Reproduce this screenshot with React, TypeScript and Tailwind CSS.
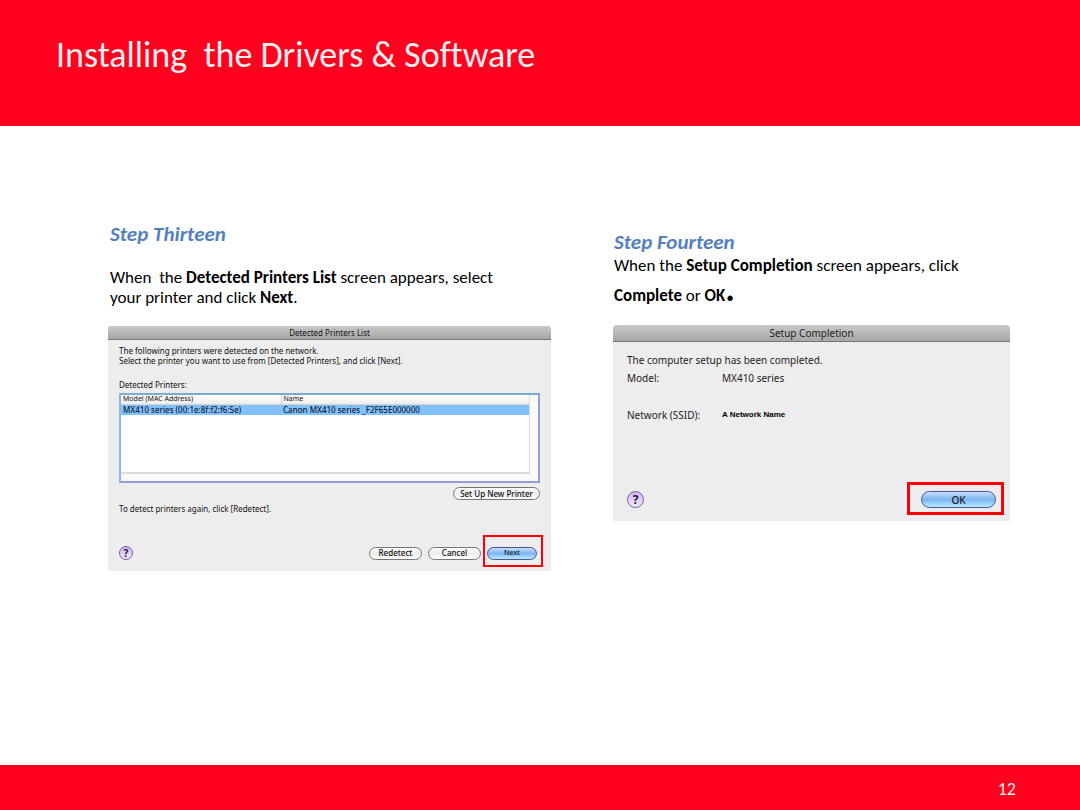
import type { ReactNode } from "react";

function HelpButton({ className }: { className: string }) {
  return (
    <button
      type="button"
      aria-label="Help"
      className={`flex shrink-0 items-center justify-center rounded-full border border-[#75609a] bg-gradient-to-b from-[#d0b4f2] to-[#f6e9ff] font-bold text-[#22182e] ${className}`}
    >
      ?
    </button>
  );
}

function PushButton({ className, children }: { className: string; children: ReactNode }) {
  return (
    <button
      type="button"
      className={`h-[13px] rounded-full border border-[#777] bg-gradient-to-b from-white via-[#ececec] to-white text-[8px] leading-[10px] font-medium text-[#111] ${className}`}
    >
      {children}
    </button>
  );
}

function DefaultButton({ className, children }: { className: string; children: ReactNode }) {
  return (
    <button
      type="button"
      className={`rounded-full border border-[#4b539c] bg-gradient-to-b from-[#c9e0fa] via-[#7db4f1] to-[#b4ecff] font-medium text-[#10182c] ${className}`}
    >
      {children}
    </button>
  );
}

function DetectedPrintersDialog() {
  return (
    <section className="flex h-[245px] flex-col overflow-hidden rounded-t-[3px] bg-[#ededed] font-['Noto_Sans',sans-serif] text-[8px] leading-[10px] text-[#111]">
      <h3 className="h-[14px] shrink-0 border-b border-[#777] bg-gradient-to-b from-[#c9c9c9] to-[#a6a6a6] text-center leading-[13px]">
        Detected Printers List
      </h3>
      <div className="flex flex-1 flex-col px-[11px] pt-[6px]">
        <p>The following printers were detected on the network.</p>
        <p>Select the printer you want to use from [Detected Printers], and click [Next].</p>
        <p className="mt-[14px]">Detected Printers:</p>
        <div className="mt-[3px] h-[90px] border-2 border-[#8f9fe0] border-t-[#78acd8] border-l-[#84b9ea] bg-[#fafafa]">
          <div className="mr-[8px] h-[79px] border-r border-b-2 border-[#dcdcdc] bg-white">
            <table className="w-full table-fixed border-collapse text-left">
              <thead>
                <tr className="h-[9px] bg-gradient-to-b from-white to-[#ededed] text-[7px] leading-[8px]">
                  <th className="w-[160px] border-r border-b border-[#d2d2d2] py-0 pl-[2px] font-normal">
                    Model (MAC Address)
                  </th>
                  <th className="border-b border-[#d2d2d2] py-0 pl-[2px] font-normal">Name</th>
                </tr>
              </thead>
              <tbody>
                <tr className="h-[10px] bg-[#82c0ff] font-medium text-[#101c30]">
                  <td className="py-0 pl-[2px]">MX410 series (00:1e:8f:f2:f6:5e)</td>
                  <td className="py-0 pl-[2px]">Canon MX410 series _F2F65E000000</td>
                </tr>
              </tbody>
            </table>
          </div>
        </div>
        <PushButton className="mt-[4px] w-[87px] self-end">Set Up New Printer</PushButton>
        <p className="mt-[4px]">To detect printers again, click [Redetect].</p>
        <div className="mt-auto mb-[11px] flex items-center">
          <HelpButton className="size-[14px] text-[10px]" />
          <PushButton className="ml-auto w-[53px]">Redetect</PushButton>
          <PushButton className="ml-[6px] w-[53px]">Cancel</PushButton>
          <div className="relative mr-[3px] ml-[6px] flex">
            <DefaultButton className="h-[13px] w-[50px] text-[7px] leading-[10px]">Next</DefaultButton>
            <span className="pointer-events-none absolute -top-[12px] -right-[6px] -bottom-[7px] -left-[4px] border-2 border-[#fb0007]" />
          </div>
        </div>
      </div>
    </section>
  );
}

function SetupCompletionDialog() {
  return (
    <section className="flex h-[196px] flex-col overflow-hidden rounded-t-[4px] bg-[#ededed] font-['Noto_Sans',sans-serif] text-[10px] leading-[12px] text-[#222]">
      <h3 className="h-[17px] shrink-0 border-b border-[#777] bg-gradient-to-b from-[#c9c9c9] to-[#a6a6a6] text-center leading-[16px]">
        Setup Completion
      </h3>
      <div className="flex flex-1 flex-col px-[14px] pt-[12px]">
        <p>The computer setup has been completed.</p>
        <dl className="mt-[6px] grid grid-cols-[95px_1fr] gap-y-[25px]">
          <dt>Model:</dt>
          <dd>MX410 series</dd>
          <dt>Network (SSID):</dt>
          <dd className="font-['Liberation_Sans',sans-serif] text-[8px] font-bold text-black">
            A Network Name
          </dd>
        </dl>
        <div className="mt-auto mb-[13px] flex items-center justify-between">
          <HelpButton className="size-[17px] text-[12px]" />
          <div className="relative flex">
            <DefaultButton className="h-[17px] w-[75px] text-[10px] leading-[14px]">OK</DefaultButton>
            <span className="pointer-events-none absolute -top-[9px] -right-[8px] -bottom-[7px] -left-[14px] border-3 border-[#fb0007]" />
          </div>
        </div>
      </div>
    </section>
  );
}

export default function App() {
  return (
    <div className="flex min-h-screen flex-col bg-white font-[Carlito,Lato,sans-serif] text-black [font-variant-ligatures:none]">
      <header className="h-[126px] bg-[#ff001e] px-14 pt-[33px]">
        <h1 className="text-[36px] leading-[44px] whitespace-pre text-[#f2eeee]">
          {"Installing  the Drivers & Software"}
        </h1>
      </header>

      <main className="flex flex-1 items-start gap-[62px] pr-[70px] pl-[108px]">
        <article className="min-w-0 flex-[443] pt-[96px]">
          <div className="pl-[2px]">
            <h2 className="text-[21px] leading-6 font-bold text-[#557fc0] italic">Step Thirteen</h2>
            <p className="mt-[22px] mb-[18px] text-[17px] leading-5 whitespace-pre-wrap">
              {"When  the "}
              <strong>Detected Printers List</strong>
              {" screen appears, select\nyour printer and click "}
              <strong>Next</strong>.
            </p>
          </div>
          <DetectedPrintersDialog />
        </article>

        <article className="min-w-0 flex-[397] pt-[104px]">
          <div className="pl-[1px]">
            <h2 className="text-[21px] leading-6 font-bold text-[#557fc0] italic">Step Fourteen</h2>
            <p className="mt-[2px] text-[17px] leading-5">
              When the <strong>Setup Completion</strong> screen appears, click
            </p>
            <p className="mt-[10px] mb-[19px] h-5 text-[17px] leading-5">
              <strong>Complete</strong> or <strong>OK</strong>
              <strong className="text-[36px] leading-[0]">.</strong>
            </p>
          </div>
          <SetupCompletionDialog />
        </article>
      </main>

      <footer className="flex h-[45px] items-center justify-end bg-[#ff001e] px-16 pt-1 text-[18px] text-[#f2eeee]">
        12
      </footer>
    </div>
  );
}
